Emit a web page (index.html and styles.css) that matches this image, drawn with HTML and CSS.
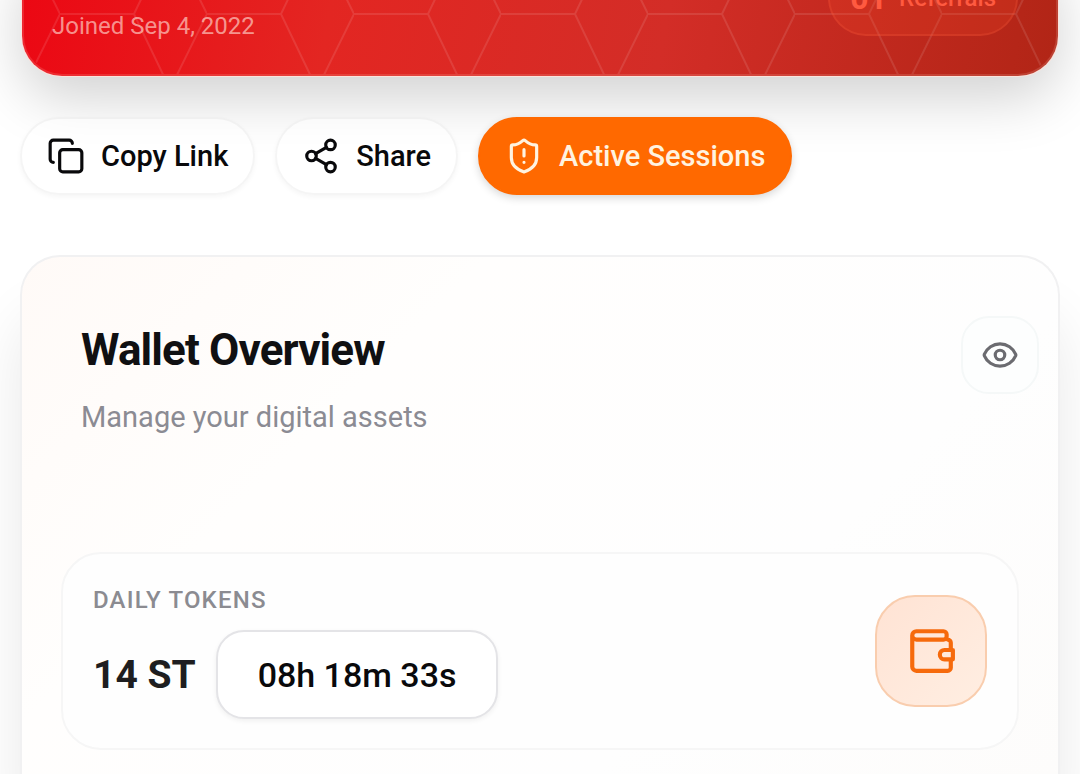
FILE: index.html
```html
<!DOCTYPE html>
<html lang="en">
<head>
<meta charset="utf-8">
<meta name="viewport" content="width=device-width, initial-scale=1">
<title>Wallet Overview</title>
<link rel="stylesheet" href="styles.css">
</head>
<body>
<main class="page">
  <section class="hero">
    <svg class="hero-pattern" aria-hidden="true">
      <defs>
        <pattern id="mesh" width="147" height="150" x="36" y="56" patternUnits="userSpaceOnUse">
          <path d="M0 0h74L110 75 74 150M147 0L110 75 147 150M0 150h74" fill="none" stroke="#fff" stroke-width="2"/>
        </pattern>
      </defs>
      <rect width="100%" height="100%" fill="url(#mesh)"/>
    </svg>
    <p class="joined">Joined Sep 4, 2022</p>
    <p class="referrals"><strong>01</strong> Referrals</p>
  </section>

  <nav class="actions" aria-label="Profile actions">
    <button class="pill" type="button">
      <svg class="icon" viewBox="0 0 24 24" aria-hidden="true"><rect x="8" y="8" width="14" height="14" rx="2"/><path d="M4 16c-1.100 0-2-.9-2-2V4c0-1.100.9-2 2-2h10c1.100 0 2 .9 2 2"/></svg>
      Copy Link
    </button>
    <button class="pill" type="button">
      <svg class="icon" viewBox="0 0 24 24" aria-hidden="true"><circle cx="18" cy="5" r="3"/><circle cx="6" cy="12" r="3"/><circle cx="18" cy="19" r="3"/><path d="M8.590 13.510l6.830 3.980M15.410 6.510L8.590 10.490"/></svg>
      Share
    </button>
    <button class="pill pill-primary" type="button">
      <svg class="icon" viewBox="0 0 24 24" aria-hidden="true"><path d="M20 13c0 5-3.500 7.500-7.660 8.950a1 1 0 0 1-.67-.01C7.500 20.500 4 18 4 13V6a1 1 0 0 1 1-1c2 0 4.500-1.200 6.240-2.720a1.170 1.170 0 0 1 1.520 0C14.510 3.810 17 5 19 5a1 1 0 0 1 1 1zM12 8v4M12 16h.01"/></svg>
      Active Sessions
    </button>
  </nav>

  <section class="wallet">
    <header class="wallet-head">
      <div>
        <h1>Wallet Overview</h1>
        <p class="subtitle">Manage your digital assets</p>
      </div>
      <button class="eye" type="button" aria-label="Toggle balance visibility">
        <svg class="icon" viewBox="0 0 24 24" aria-hidden="true"><path d="M2.062 12.348a1 1 0 0 1 0-.696 10.750 10.750 0 0 1 19.876 0 1 1 0 0 1 0 .696 10.750 10.750 0 0 1-19.876 0"/><circle cx="12" cy="12" r="3"/></svg>
      </button>
    </header>
    <div class="tile">
      <div>
        <h2>DAILY TOKENS</h2>
        <div class="balance">
          <strong>14 ST</strong>
          <button class="timer" type="button">08h 18m 33s</button>
        </div>
      </div>
      <span class="badge">
        <svg class="badge-icon" viewBox="0 0 48 48" aria-hidden="true"><path d="M6 9v30a4 4 0 0 0 4 4h30a3 3 0 0 0 3-3v-7M43 22v-6a3 3 0 0 0-3-3M10 13h26a3 3 0 0 0 3-3V8a3 3 0 0 0-3-3H10a4 4 0 0 0 0 8M45 23v9h-8a4.500 4.500 0 0 1 0-9z"/></svg>
      </span>
    </div>
  </section>
</main>
</body>
</html>
```
FILE: styles.css
```css
* { box-sizing: border-box; }
body {
  margin: 0;
  background: #fff;
  color: #09090b;
  font-family: Roboto, "Liberation Sans", sans-serif;
}
h1, h2, p { margin: 0; }
button { font: inherit; color: inherit; cursor: pointer; }
.page {
  display: flex;
  flex-direction: column;
  min-height: 100vh;
  padding: 0 20px;
  overflow: hidden;
}

.hero {
  position: relative;
  display: flex;
  justify-content: space-between;
  align-items: flex-end;
  height: 118px;
  margin: -42px 2px 0;
  padding: 0 38px 34px 28px;
  border: 2px solid rgba(255, 225, 215, 0.15);
  border-top: 0;
  border-radius: 0 0 40px 40px;
  background: linear-gradient(100deg, #ec0713 0%, #e32622 30%, #d32d27 62%, #b12516 100%) border-box;
  box-shadow: 0 0 0 1px #fbe3dc, 0 22px 56px rgba(0, 0, 0, 0.18);
}
.hero-pattern {
  position: absolute;
  inset: 0;
  width: 100%;
  height: 100%;
  opacity: 0.1;
  border-radius: inherit;
}
.joined {
  position: relative;
  font-size: 24px;
  line-height: 28px;
  color: rgba(255, 220, 210, 0.65);
}
.referrals {
  position: relative;
  display: flex;
  align-items: center;
  gap: 12px;
  height: 76px;
  margin-bottom: 4px;
  padding: 0 20px;
  border: 2px solid rgba(255, 100, 70, 0.2);
  border-radius: 38px;
  background: rgba(255, 80, 40, 0.18);
  color: #ff5a40;
  font-size: 24px;
  font-weight: 500;
}
.referrals strong { font-size: 32px; font-weight: 700; }

.actions {
  position: relative;
  display: flex;
  gap: 20px;
  margin-top: 41px;
}
.pill {
  display: flex;
  align-items: center;
  gap: 16px;
  height: 78px;
  padding: 0 25px;
  border: 2px solid rgba(0, 0, 0, 0.04);
  border-radius: 40px;
  background: rgba(255, 255, 255, 0.5);
  box-shadow: 0 2px 5px rgba(0, 0, 0, 0.04);
  font-size: 29px;
  font-weight: 500;
}
.icon {
  width: 38px;
  height: 38px;
  fill: none;
  stroke: currentColor;
  stroke-width: 2;
  stroke-linecap: round;
  stroke-linejoin: round;
}
.pill-primary {
  border-color: #ff6900;
  background: #ff6900;
  color: #fff3e0;
  box-shadow: 0 3px 8px rgba(0, 0, 0, 0.16);
}

.wallet {
  position: relative;
  flex: 1;
  margin-top: 60px;
  padding: 59px 39px 0;
  border: 2px solid #f1f1f2;
  border-bottom: 0;
  border-radius: 40px 40px 0 0;
  background: linear-gradient(135deg, #fffaf7 0%, #fffefd 30%, #fefefe 70%, #fdfcfb 100%);
  box-shadow: 0 60px 60px rgba(0, 0, 0, 0.09);
}
.wallet-head {
  display: flex;
  justify-content: space-between;
  align-items: flex-start;
  margin-right: -20px;
  padding-left: 20px;
}
h1 {
  margin-top: 7px;
  font-size: 44px;
  line-height: 54px;
  font-weight: 700;
  letter-spacing: -0.02em;
  color: #101012;
}
.subtitle { margin-top: 20px; font-size: 29px; line-height: 40px; color: #8b8b93; }
.eye {
  display: grid;
  place-items: center;
  width: 78px;
  height: 78px;
  padding: 0;
  border: 2px solid #f5f8f8;
  border-radius: 28px;
  background: #fdfefe;
  color: #6b6b70;
}
.tile {
  display: flex;
  justify-content: space-between;
  align-items: center;
  margin-top: 115px;
  padding: 29px 30px;
  border: 2px solid #f6f6f6;
  border-radius: 40px;
  background: #fefefe;
}
h2 { font-size: 24px; line-height: 34px; font-weight: 500; letter-spacing: 0.05em; color: #8b8b91; }
.balance { display: flex; align-items: center; gap: 20px; margin-top: 13px; }
.balance strong { font-size: 39px; font-weight: 700; color: #1e1e20; }
.timer {
  height: 89px;
  padding: 0 40px;
  border: 2px solid #e4e4e7;
  border-radius: 28px;
  background: #fff;
  box-shadow: 0 2px 5px rgba(0, 0, 0, 0.06);
  font-size: 34px;
  font-weight: 500;
}
.badge {
  display: grid;
  place-items: center;
  width: 112px;
  height: 112px;
  border: 2px solid #f9cdae;
  border-radius: 40px;
  background: linear-gradient(135deg, #ffe3d4, #ffeee2);
}
.badge-icon {
  width: 50px;
  height: 50px;
  fill: none;
  stroke: #f66a0c;
  stroke-width: 4;
  stroke-linecap: round;
  stroke-linejoin: round;
}
```
